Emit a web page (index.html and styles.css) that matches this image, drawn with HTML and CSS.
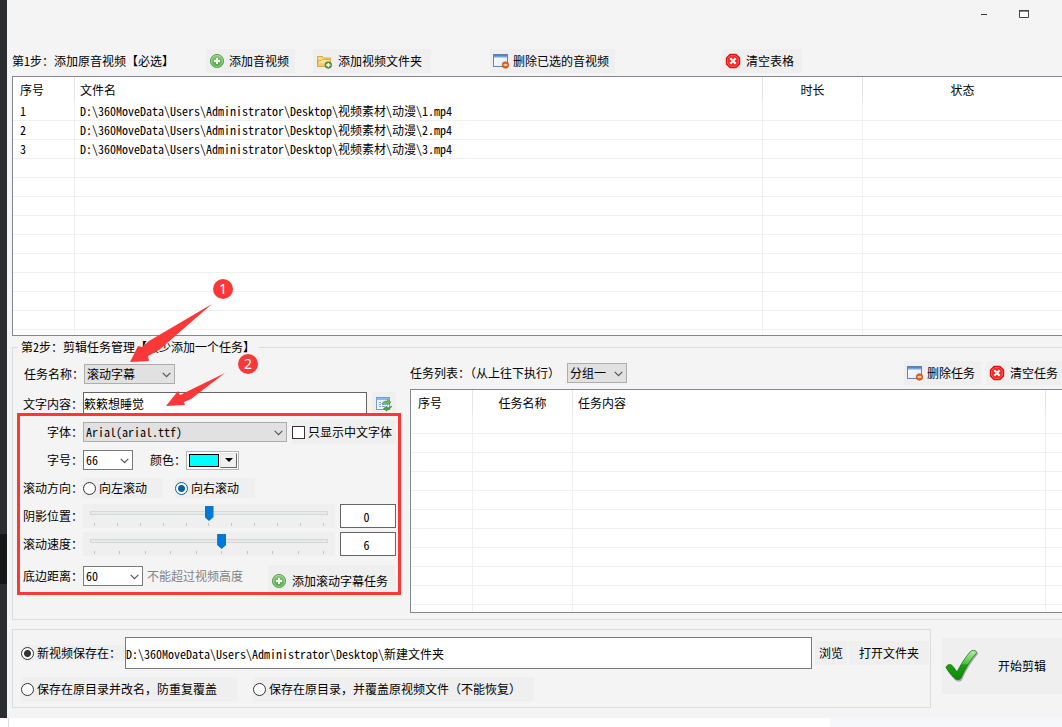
FILE: index.html
```html
<!DOCTYPE html>
<html lang="zh-CN">
<head>
<meta charset="utf-8">
<meta name="viewport" content="width=device-width, initial-scale=1">
<title>视频剪辑</title>
<link rel="stylesheet" href="styles.css">
</head>
<body>
<svg class="defs" aria-hidden="true">
  <defs>
    <linearGradient id="g-green" x1="0" y1="0" x2="0" y2="1"><stop offset="0" stop-color="#8fce7c"/><stop offset="1" stop-color="#4ba345"/></linearGradient>
    <linearGradient id="g-folder" x1="0" y1="0" x2="0" y2="1"><stop offset="0" stop-color="#fff3c4"/><stop offset="1" stop-color="#f0bf4c"/></linearGradient>
    <linearGradient id="g-win" x1="0" y1="0" x2="1" y2="1"><stop offset="0" stop-color="#ffffff"/><stop offset="1" stop-color="#dde9f8"/></linearGradient>
    <linearGradient id="g-check" x1="0" y1="0" x2="0" y2="1"><stop offset="0" stop-color="#b5f0a8"/><stop offset=".45" stop-color="#4cc43c"/><stop offset=".5" stop-color="#17a30d"/><stop offset="1" stop-color="#0d8a08"/></linearGradient>
    <symbol id="i-add" viewBox="0 0 16 16">
      <circle cx="8" cy="8" r="6.6" fill="url(#g-green)" stroke="#5aa653"/>
      <circle cx="8" cy="8" r="5.5" fill="none" stroke="#a9dc9b" stroke-width=".8"/>
      <path d="M8 5v6M5 8h6" stroke="#fff" stroke-width="2"/>
    </symbol>
    <symbol id="i-folder" viewBox="0 0 16 16">
      <path d="M1.5 13.5v-10h5l1 1.5h7v8.5z" fill="#f8dc86" stroke="#dba53c"/>
      <path d="M1.5 13.5l1-6h3l1-1h8v7z" fill="url(#g-folder)" stroke="#e0ac42"/>
      <circle cx="12.3" cy="12" r="3.3" fill="#5d9f3e" stroke="#3f7d2a" stroke-width=".8"/>
      <path d="M12.3 10v4M10.3 12h4" stroke="#fff" stroke-width="1.3"/>
    </symbol>
    <symbol id="i-remove" viewBox="0 0 16 16">
      <rect x=".5" y="1.5" width="14" height="12" fill="url(#g-win)" stroke="#5b85bd"/>
      <path d="M1 2h13v2.500H1z" fill="#6fa4e4"/>
      <path d="M1 2.200h13" stroke="#4577c4"/>
      <circle cx="12.5" cy="12" r="3.3" fill="#e4641c" stroke="#b9480d" stroke-width=".6"/>
      <path d="M10.7 12h3.600" stroke="#ffe6d5" stroke-width="1.4"/>
    </symbol>
    <symbol id="i-clear" viewBox="0 0 16 16">
      <path d="M5 1.500h6L14.500 5v6L11 14.500H5L1.500 11V5z" fill="#f22" stroke="#e11414" stroke-width="1.4" stroke-linejoin="round"/>
      <path d="M5.300 2.700h5.400l2.600 2.600v5.400l-2.600 2.600H5.300l-2.600-2.600V5.300z" fill="none" stroke="#ff7474" stroke-width=".7"/>
      <path d="M5.300 5.300l5.400 5.400M10.700 5.300l-5.400 5.400" stroke="#fff" stroke-width="2.2"/>
    </symbol>
    <symbol id="i-chevron" viewBox="0 0 9 6"><path d="M.7.9l3.800 3.800L8.300.9" fill="none" stroke="#555" stroke-width="1.2"/></symbol>
  </defs>
</svg>

<div class="app">
  <div class="edge"><div class="edge-top"></div><div class="edge-mid"></div><div class="edge-end"></div></div>
  <main class="window">
    <header class="titlebar">
      <button class="sys" aria-label="最小化"><svg width="10" height="10" viewBox="0 0 10 10"><path d="M2 5.500h6" stroke="#333"/></svg></button>
      <button class="sys" aria-label="最大化"><svg width="10" height="10" viewBox="0 0 10 10"><path d="M.5 1.500h9v7h-9z" fill="#fff" stroke="#444"/><path d="M1 2.500h8" stroke="#888"/><path d="M0 1.500h10" stroke="#444"/></svg></button>
    </header>

    <div class="toolbar">
      <span class="step">第1步：添加原音视频【必选】</span>
      <button class="btn add-av"><svg class="icon"><use href="#i-add"/></svg>添加音视频</button>
      <button class="btn add-dir"><svg class="icon"><use href="#i-folder"/></svg>添加视频文件夹</button>
      <button class="btn del-av"><svg class="icon"><use href="#i-remove"/></svg>删除已选的音视频</button>
      <button class="btn clear-av"><svg class="icon"><use href="#i-clear"/></svg>清空表格</button>
    </div>

    <div class="grid-box files">
      <table>
        <colgroup><col class="c-no"><col><col class="c-100"><col class="c-200"></colgroup>
        <thead><tr><th>序号</th><th>文件名</th><th class="mid">时长</th><th class="mid">状态</th></tr></thead>
        <tbody>
          <tr><td>1</td><td>D:\360MoveData\Users\Administrator\Desktop\视频素材\动漫\1.mp4</td><td></td><td></td></tr>
          <tr><td>2</td><td>D:\360MoveData\Users\Administrator\Desktop\视频素材\动漫\2.mp4</td><td></td><td></td></tr>
          <tr><td>3</td><td>D:\360MoveData\Users\Administrator\Desktop\视频素材\动漫\3.mp4</td><td></td><td></td></tr>
          <tr><td></td><td></td><td></td><td></td></tr>
          <tr><td></td><td></td><td></td><td></td></tr>
          <tr><td></td><td></td><td></td><td></td></tr>
          <tr><td></td><td></td><td></td><td></td></tr>
          <tr><td></td><td></td><td></td><td></td></tr>
          <tr><td></td><td></td><td></td><td></td></tr>
          <tr><td></td><td></td><td></td><td></td></tr>
          <tr><td></td><td></td><td></td><td></td></tr>
          <tr><td></td><td></td><td></td><td></td></tr>
          <tr class="rest"><td></td><td></td><td></td><td></td></tr>
        </tbody>
      </table>
    </div>

    <fieldset class="tasks">
      <legend>第2步：剪辑任务管理【最少添加一个任务】</legend>
      <div class="task-cols">
        <div class="form">
          <div class="row first">
            <label class="lab" for="task">任务名称：</label>
            <span class="combo w-task"><select id="task"><option>滚动字幕</option></select><svg class="chev"><use href="#i-chevron"/></svg></span>
          </div>
          <div class="row second">
            <label class="lab" for="text">文字内容：</label>
            <input class="text" id="text" type="text" value="簌簌想睡觉">
            <button class="btn refresh" aria-label="刷新"><svg width="16" height="16" viewBox="0 0 16 16"><rect x=".5" y="1.5" width="13" height="12" fill="#eef5fd" stroke="#6f9fd4"/><path d="M1 3h12" stroke="#8db9ea" stroke-width="2"/><path d="M3 6.500h2M3 8.500h2M3 10.500h2M6 8.500h5M6 10.500h3" stroke="#7aa6d8"/><path d="M6 8c1-2.500 3.500-3.500 5.500-2.700V3.500L15 6.300l-3.500 2.800V7.500C9.500 7 8 7.300 6 8z" fill="#6cb960" stroke="#3e8f3a" stroke-width=".6"/><path d="M15.500 10c-.5 2.500-2.500 3.500-4.500 3.300v1.900L7.500 12.600l3.500-2.400v1.500c1.800.2 3-.4 4.500-1.700z" fill="#4fa548" stroke="#2f7c2f" stroke-width=".6"/></svg></button>
          </div>
          <div class="row">
            <label class="lab" for="font">字体：</label>
            <span class="combo w-font"><select id="font"><option>Arial(arial.ttf)</option></select><svg class="chev"><use href="#i-chevron"/></svg></span>
            <label class="opt only-cn"><input type="checkbox">只显示中文字体</label>
          </div>
          <div class="row">
            <label class="lab" for="size">字号：</label>
            <span class="combo edit w-size"><select id="size"><option>66</option></select><svg class="chev"><use href="#i-chevron"/></svg></span>
            <label class="color-lab" for="color">颜色：</label>
            <button class="color" id="color" aria-label="颜色"><span class="swatch"></span><span class="drop"><svg width="8" height="4" viewBox="0 0 8 4"><path d="M0 0h8L4 4z"/></svg></span></button>
          </div>
          <div class="row">
            <span class="lab">滚动方向：</span>
            <label class="opt dir"><input type="radio" name="dir">向左滚动</label>
            <label class="opt dir right"><input class="blue" type="radio" name="dir" checked>向右滚动</label>
          </div>
          <div class="row">
            <label class="lab" for="shadow">阴影位置：</label>
            <span class="slider"><input id="shadow" type="range" min="-5" max="5" value="0"><span class="ticks"><i></i><i></i><i></i><i></i><i></i><i></i><i></i><i></i><i></i><i></i><i></i></span></span>
            <input class="num" type="text" value="0" aria-label="阴影位置">
          </div>
          <div class="row">
            <label class="lab" for="speed">滚动速度：</label>
            <span class="slider"><input id="speed" type="range" min="1" max="10" value="6"><span class="ticks"><i></i><i></i><i></i><i></i><i></i><i></i><i></i><i></i><i></i><i></i></span></span>
            <input class="num" type="text" value="6" aria-label="滚动速度">
          </div>
          <div class="row last">
            <label class="lab" for="bottom">底边距离：</label>
            <span class="combo edit w-bottom"><select id="bottom"><option>60</option></select><svg class="chev"><use href="#i-chevron"/></svg></span>
            <span class="hint">不能超过视频高度</span>
            <button class="btn add-task"><svg class="icon"><use href="#i-add"/></svg>添加滚动字幕任务</button>
          </div>
        </div>

        <section class="list">
          <div class="list-bar">
            <label for="group">任务列表：（从上往下执行）</label>
            <span class="combo w-group"><select id="group"><option>分组一</option></select><svg class="chev"><use href="#i-chevron"/></svg></span>
            <button class="btn del-task"><svg class="icon"><use href="#i-remove"/></svg>删除任务</button>
            <button class="btn clear-task"><svg class="icon"><use href="#i-clear"/></svg>清空任务</button>
          </div>
          <div class="grid-box">
            <table>
              <colgroup><col class="c-no"><col class="c-100"><col><col class="c-16"></colgroup>
              <thead><tr><th>序号</th><th class="mid">任务名称</th><th>任务内容</th><th></th></tr></thead>
              <tbody>
                <tr><td></td><td></td><td></td><td></td></tr>
                <tr><td></td><td></td><td></td><td></td></tr>
                <tr><td></td><td></td><td></td><td></td></tr>
                <tr><td></td><td></td><td></td><td></td></tr>
                <tr><td></td><td></td><td></td><td></td></tr>
                <tr><td></td><td></td><td></td><td></td></tr>
                <tr><td></td><td></td><td></td><td></td></tr>
                <tr><td></td><td></td><td></td><td></td></tr>
                <tr><td></td><td></td><td></td><td></td></tr>
                <tr><td></td><td></td><td></td><td></td></tr>
                <tr class="rest"><td></td><td></td><td></td><td></td></tr>
              </tbody>
            </table>
          </div>
        </section>
      </div>
    </fieldset>

    <div class="footer">
      <div class="save">
        <div class="save-row">
          <label class="opt save-new"><input type="radio" name="save" checked>新视频保存在：</label>
          <input class="path" type="text" value="D:\360MoveData\Users\Administrator\Desktop\新建文件夹" aria-label="保存路径">
          <button class="btn browse">浏览</button>
          <button class="btn open-dir">打开文件夹</button>
        </div>
        <div class="save-row">
          <label class="opt keep"><input type="radio" name="save">保存在原目录并改名，防重复覆盖</label>
          <label class="opt overwrite"><input type="radio" name="save">保存在原目录，并覆盖原视频文件（不能恢复）</label>
        </div>
      </div>
      <button class="btn start"><svg width="36" height="36" viewBox="0 0 36 36"><path d="M3 21c1-4 5-4 7-1l4 5c4-8 8-14 13-20 2-3 7-2 7 1-6 7-11 15-16 26-1 2-5 2-7 0-3-3-6-7-8-11z" fill="#777" opacity=".55"/><path d="M2 19.500c1-3.500 5-4 7-1l4 5.500c4-8 8-14 13-20 2-2.500 7-2 6.500 1-6 7-11 15-15.500 25-1 2-5 2-6.500 0-3.500-3-6.500-7-8.500-10.500z" fill="url(#g-check)" stroke="#23711f" stroke-width=".8"/></svg>开始剪辑</button>
    </div>

    <div class="notes" aria-hidden="true">
      <svg class="arrows" width="260" height="130" viewBox="0 0 260 130"><path d="M123 80l8-16 4 1 7-6 63-37-53 46-11 6 1 5zM159 124l12-15 2 4 45-22-34 26-7 3 1 3z" fill="#fb3838"/></svg>
      <span class="badge one">1</span>
      <span class="badge two">2</span>
      <div class="frame"></div>
    </div>
  </main>
</div>
<div class="below"><div class="below-page"></div></div>
</body>
</html>
```

FILE: styles.css
```css
* { box-sizing: border-box; }

body {
  margin: 0;
  overflow-x: hidden;
  background: #f6f7fb;
  color: #000;
  font: 12px/16px "Noto Sans Mono CJK SC", "Noto Sans CJK SC", "Liberation Mono", monospace;
}

button, input, select { font: inherit; color: inherit; margin: 0; border-radius: 0; }
button { border: 0; padding: 0; background: none; }
.defs { position: absolute; width: 0; height: 0; }

.app { display: flex; }
.edge { flex: 0 0 7px; display: flex; flex-direction: column; }
.edge-top { flex: 534; background: #2b2c30; }
.edge-mid { flex: 50; background: #141517; }
.edge-end { flex: 134; background: #2b2c30; }

.window {
  position: relative;
  flex: 1;
  min-width: 0;
  padding: 0 0 10px 5px;
  background: #f4f4f4;
}

.titlebar { display: flex; justify-content: flex-end; gap: 10px; height: 49px; padding-right: 23px; }
.sys { width: 30px; height: 28px; display: flex; align-items: center; justify-content: center; }

.btn {
  display: flex;
  align-items: center;
  flex: none;
  height: 24px;
  padding-left: 3px;
  background: #efefef;
  white-space: nowrap;
}
.icon { width: 16px; height: 16px; margin-right: 4px; flex: none; }

.toolbar { display: flex; align-items: center; padding-bottom: 3px; }
.step { width: 194px; white-space: nowrap; }
.add-av { width: 89px; }
.add-dir { width: 118px; margin-left: 18px; }
.clear-av .icon, .clear-task .icon { margin-right: 5px; }
.add-dir .icon { margin-right: 6px; }
.del-av { width: 125px; margin-left: 59px; }
.clear-av { width: 80px; margin-left: 107px; }

.grid-box { border: 1px solid #828790; border-right: 0; background: #fff; }
table { width: 100%; border-collapse: separate; border-spacing: 0; table-layout: fixed; }
th, td { padding: 0 5px; text-align: left; font-weight: normal; white-space: nowrap; overflow: hidden; }
th { height: 25px; border-right: 1px solid #e5e5e5; }
td { height: 19px; border-right: 1px solid #f0f0f0; border-bottom: 1px solid #f0f0f0; line-height: 18px; }
th:first-child, td:first-child { padding-left: 7px; }
th:last-child, td:last-child { border-right: 0; }
th.mid { text-align: center; }
.rest td { height: 5px; border-bottom: 0; line-height: 4px; }
.list .rest td { height: 7px; }
.c-no { width: 62px; }
.c-100 { width: 100px; }
.c-200 { width: 199px; }
.c-16 { width: 16px; }

.tasks {
  min-width: 0;
  margin: 3px 0 0;
  padding: 0;
  border: 1px solid #dcdcdc;
  border-right: 0;
}
.tasks legend { margin-left: 5px; padding: 0 3px; height: 16px; line-height: 16px; }
.task-cols { display: flex; padding-bottom: 6px; }
.form { flex: 0 0 397px; padding: 4px 0 0 9px; }
.row { display: flex; align-items: center; height: 28px; }
.row.first { height: 30px; }
.row.second { height: 29px; }
.lab { flex: 0 0 61px; white-space: nowrap; text-align: right; }
.first .lab { flex-basis: 62px; }

.combo { position: relative; display: block; flex: none; height: 20px; }
.combo select {
  appearance: none;
  width: 100%;
  height: 20px;
  padding: 0 2px;
  border: 1px solid #adadad;
  background: #e1e1e1;
  line-height: 18px;
  display: block;
}
.combo.edit select { border-color: #7a7a7a; background: #fff; }
.chev { position: absolute; right: 4px; top: 8px; width: 9px; height: 6px; pointer-events: none; }
.w-task { width: 91px; }
.w-font { width: 204px; }
.w-size { width: 50px; }
.w-bottom { width: 60px; }
.w-group { width: 60px; }

.text { width: 284px; height: 23px; padding: 0; border: 1px solid #646464; background: #fff; }
.refresh { width: 24px; margin-left: 5px; padding-left: 4px; }

.opt { display: flex; align-items: center; height: 24px; background: #efefef; white-space: nowrap; }
.opt input {
  appearance: none;
  flex: none;
  width: 13px;
  height: 13px;
  margin-right: 3px;
  border: 1px solid #333;
  background: #fff;
}
.opt input[type="radio"] { border-radius: 50%; }
.opt input[type="radio"]:checked { background: radial-gradient(circle, #333 0 3px, #fff 4px); }
.opt input.blue { border-color: #0a5cad; }
.opt input.blue[type="radio"]:checked { background: radial-gradient(circle, #0a5cad 0 3px, #fff 4px); }
.only-cn { width: 104px; margin-left: 5px; }
.dir { width: 80px; height: 20px; }
.dir.right { margin-left: 12px; }

.color-lab { margin-left: 17px; }
.color {
  display: flex;
  width: 53px;
  height: 19px;
  padding: 1px;
  border: 1px solid #808080;
  border-right-color: #fff;
  border-bottom-color: #fff;
  background: #fff;
  outline: 1px solid #b4b4b4;
  outline-offset: -1px;
}
.swatch { flex: 1; margin: 1px; border: 1px solid #000; background: #00ffff; }
.drop {
  width: 17px;
  display: flex;
  align-items: center;
  justify-content: center;
  border: 1px solid #e3e3e3;
  border-right-color: #696969;
  border-bottom-color: #696969;
  background: #f0f0f0;
}

.slider { display: flex; flex-direction: column; flex: none; width: 252px; height: 24px; padding: 2px 7px; background: #efefef; }
.slider input { appearance: none; display: block; width: 238px; height: 15px; background: none; }
.slider input::-webkit-slider-runnable-track {
  height: 4px;
  border: 1px solid #d6d6d6;
  background: #e7eaea;
}
.slider input::-webkit-slider-thumb {
  appearance: none;
  width: 9px;
  height: 15px;
  margin-top: -6px;
  border: 0;
  background: #0078d7;
  clip-path: polygon(0 0, 100% 0, 100% 73%, 50% 100%, 0 73%);
}
.ticks { display: flex; justify-content: space-between; padding: 3px 4px 0; }
.ticks i { width: 1px; height: 3px; background: #c4c4c4; }
.num { width: 56px; height: 24px; margin-left: 5px; padding: 0 3px 0 0; border: 1px solid #646464; background: #fff; text-align: center; }

.row.last { height: 36px; }
.hint { margin-left: 4px; color: #838383; white-space: nowrap; }
.add-task { width: 128px; height: 32px; margin: 10px 0 0 25px; }
.add-task .icon { margin-right: 5px; }

.list { flex: 1; min-width: 0; padding-top: 6px; }
.list-bar { display: flex; align-items: center; padding-bottom: 4px; }
.list-bar label { width: 157px; white-space: nowrap; }
.del-task { width: 77px; margin-left: auto; }
.clear-task { width: 76px; margin-left: 5px; }

.footer { display: flex; align-items: flex-start; gap: 11px; margin-top: 9px; }
.save { flex: 1; min-width: 0; height: 79px; padding: 7px 1px 0 8px; border: 1px solid #dcdcdc; }
.save-row { display: flex; align-items: center; height: 32px; }
.save-row + .save-row { height: 24px; margin-top: 8px; }
.save-new { width: 104px; height: 16px; }
.path { flex: 1; min-width: 0; height: 32px; padding: 0; border: 1px solid #7a7a7a; background: #fff; }
.browse { width: 32px; margin-left: 3px; justify-content: center; padding: 0; }
.open-dir { width: 80px; margin-left: 2px; justify-content: center; padding: 0; }
.keep { width: 216px; }
.overwrite { width: 281px; margin-left: 16px; }
.start { width: 120px; height: 56px; margin-top: 9px; padding-left: 2px; gap: 18px; }

.notes { position: absolute; inset: 0; pointer-events: none; }
.arrows { position: absolute; left: 0; top: 282px; }
.badge {
  position: absolute;
  width: 20px;
  height: 20px;
  border-radius: 50%;
  background: #fb3838;
  color: #fff;
  font: 14px/20px "Noto Sans", sans-serif;
  text-align: center;
}
.badge.one { left: 206px; top: 279px; }
.badge.two { left: 231px; top: 354px; }
.frame { position: absolute; left: 10px; top: 413px; width: 384px; height: 182px; border: 3px solid #fb3838; }

.below { display: flex; height: 9px; background: #fff; padding-left: 8px; }
.below-page { flex: 1; border-left: 1px solid #ddd; background: linear-gradient(90deg, #fff 78%, #f6f7fb 78%); }
```
